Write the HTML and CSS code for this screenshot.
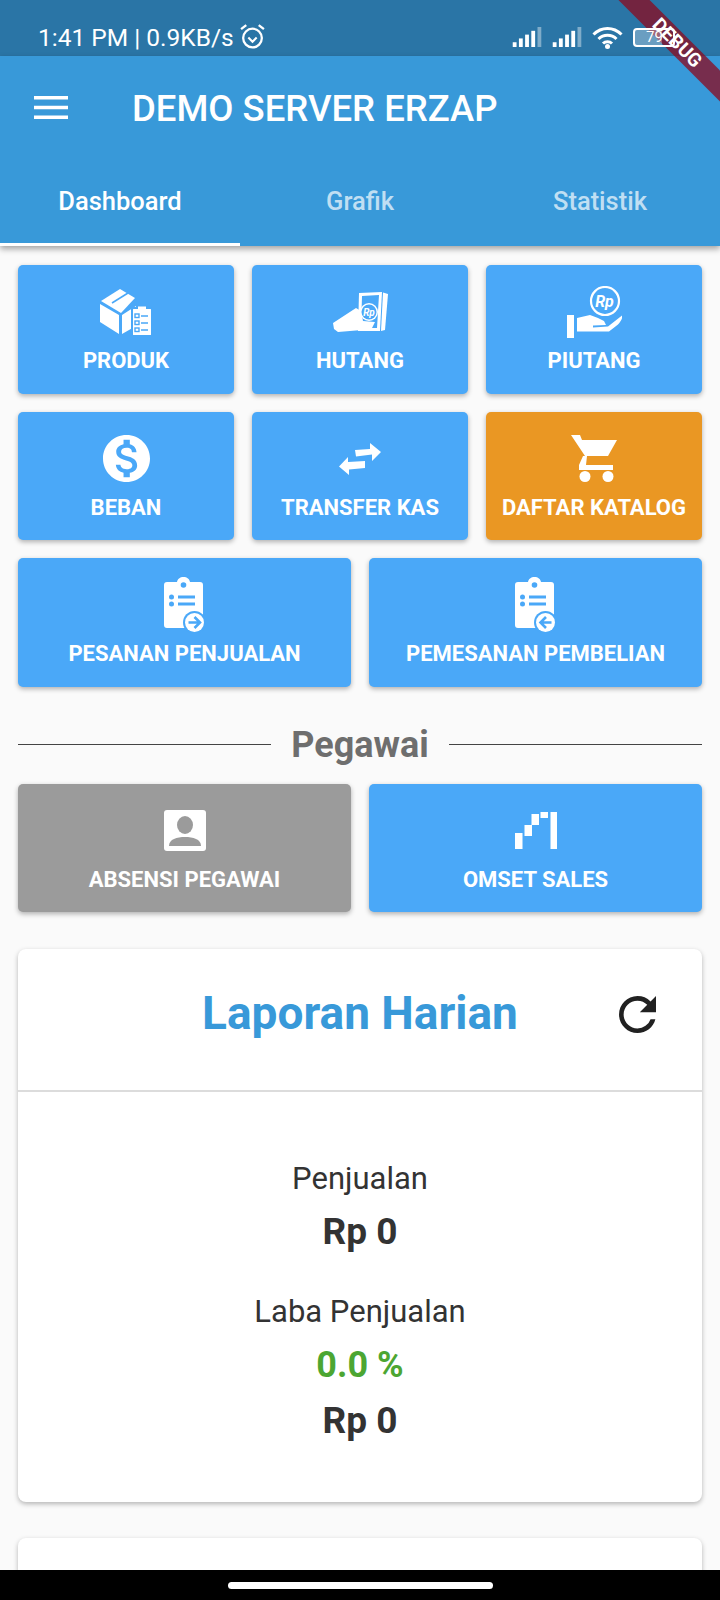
FILE: index.html
```html
<!DOCTYPE html>
<html lang="id">
<head>
<meta charset="utf-8">
<title>Demo Server Erzap</title>
<link rel="stylesheet" href="styles.css">
</head>
<body>
<div class="phone">
  <div class="statusbar">
    <div class="status-left">
      <span>1:41 PM | 0.9KB/s</span>
      <svg class="alarm" viewBox="0 0 26 26"><circle cx="13" cy="14.500" r="9" fill="none" stroke="#fff" stroke-width="2.200"/><path d="M9 14l4 4 4-4" fill="none" stroke="#fff" stroke-width="2"/><path d="M2 6l5-4M24 6l-5-4" stroke="#fff" stroke-width="2.200" fill="none"/></svg>
    </div>
    <div class="status-right">
      <svg class="signal" viewBox="0 0 31 21"><rect x="0" y="16" width="4" height="5" fill="#fff"/><rect x="6.500" y="12" width="4" height="9" fill="#fff"/><rect x="13" y="8" width="4" height="13" fill="#fff"/><rect x="19.500" y="4" width="4" height="17" fill="#fff"/><rect x="26" y="0" width="4" height="21" fill="#fff" opacity=".4"/></svg>
      <svg class="signal" viewBox="0 0 31 21"><rect x="0" y="16" width="4" height="5" fill="#fff"/><rect x="6.500" y="12" width="4" height="9" fill="#fff"/><rect x="13" y="8" width="4" height="13" fill="#fff"/><rect x="19.500" y="4" width="4" height="17" fill="#fff"/><rect x="26" y="0" width="4" height="21" fill="#fff" opacity=".4"/></svg>
      <svg class="wifi" viewBox="0 0 31 23"><g fill="none" stroke="#fff" stroke-width="3"><path d="M1.500 8.500C9.500 .5 21.500 .5 29.500 8.500"/><path d="M6.500 13C11.500 8 19.500 8 24.500 13"/><path d="M11 17.500C13.500 15 17.500 15 20 17.500"/></g><circle cx="15.500" cy="20.500" r="2.500" fill="#fff"/></svg>
      <div class="battery"><div class="battery-fill"></div><span class="battery-text">79</span></div>
    </div>
  </div>

  <header class="appbar">
    <div class="toolbar">
      <svg class="menu" viewBox="0 0 34 23"><path d="M0 0h34v3.500H0zM0 9.800h34v3.500H0zM0 19.500h34V23H0z" fill="#fff"/></svg>
      <h1 class="title">DEMO SERVER ERZAP</h1>
    </div>
    <nav class="tabs">
      <div class="tab tab-active">Dashboard</div>
      <div class="tab">Grafik</div>
      <div class="tab">Statistik</div>
    </nav>
  </header>

  <main class="content">
    <section class="grid grid-3">
      <a class="btn">
        <span class="icon-box">
          <svg class="ic-produk" viewBox="0 0 52 47"><path d="M20 0L35 9 21 24 1 12z" fill="#fff"/><path d="M0 15l19 11v19L0 33zM22 26l14-9v20L22 45z" fill="#fff"/><path d="M28 4L12 14" stroke="#4aa8f8" stroke-width="1.600" fill="none"/><rect x="32" y="19" width="20" height="28" rx="1.500" fill="#fff" stroke="#4aa8f8" stroke-width="2"/><rect x="38" y="17.500" width="8" height="4" fill="#fff"/><g fill="none" stroke="#4aa8f8" stroke-width="1.400"><rect x="35" y="25" width="4" height="3.500"/><rect x="35" y="32" width="4" height="3.500"/><rect x="35" y="39" width="4" height="3.500"/><path d="M41 27h7M41 34h7M41 41h7"/></g></svg>
        </span>
        <span class="label">PRODUK</span>
      </a>
      <a class="btn">
        <span class="icon-box">
          <svg class="ic-hutang" viewBox="0 0 56 42"><path d="M51 1.500l5 1.500-3 36-4 1z" fill="#fff"/><path d="M27 2l23-1-2 39-22 0z" fill="#fff"/><path d="M30 5l17-1-2 33-16 0z" fill="#4aa8f8"/><path d="M1 32L24 17l5 3 2 10 12 1-3 6-10 2-24 2-4-3z" fill="#fff"/><circle cx="37" cy="21" r="9" fill="#fff"/><circle cx="37" cy="21" r="7.500" fill="#4aa8f8"/><text class="rp-small" x="37" y="24.500" text-anchor="middle">Rp</text></svg>
        </span>
        <span class="label">HUTANG</span>
      </a>
      <a class="btn">
        <span class="icon-box">
          <svg class="ic-piutang" viewBox="0 0 55 52"><circle cx="38" cy="15" r="14" fill="none" stroke="#fff" stroke-width="2.200"/><text class="rp-big" x="37.500" y="20.500" text-anchor="middle">Rp</text><rect x="0" y="29" width="7" height="23" fill="#fff"/><path d="M10 32l13-3 8 3 6 3 2 4-13 .5v2l15-1 14-11c1 2-1 6-4 9l-9 7H10z" fill="#fff"/></svg>
        </span>
        <span class="label">PIUTANG</span>
      </a>
      <a class="btn">
        <span class="icon-box">
          <svg class="ic-circle" viewBox="2 2 20 20"><path d="M12 2C6.480 2 2 6.480 2 12s4.480 10 10 10 10-4.480 10-10S17.520 2 12 2zm1.410 16.090V20h-2.670v-1.930c-1.710-.36-3.160-1.460-3.270-3.400h1.960c.1 1.050.82 1.870 2.650 1.870 1.960 0 2.400-.98 2.400-1.590 0-.83-.44-1.610-2.670-2.140-2.480-.6-4.180-1.620-4.180-3.670 0-1.720 1.390-2.840 3.110-3.210V4h2.670v1.950c1.860.45 2.790 1.860 2.850 3.390H14.300c-.05-1.110-.64-1.870-2.220-1.870-1.500 0-2.400.68-2.400 1.640 0 .84.65 1.390 2.670 1.910s4.180 1.390 4.180 3.910c-.01 1.830-1.380 2.830-3.120 3.160z" fill="#fff"/></svg>
        </span>
        <span class="label">BEBAN</span>
      </a>
      <a class="btn">
        <span class="icon-box">
          <svg class="ic-swap" viewBox="0 0 42 32"><path d="M16 7l15-1V0l11 9-9 9v-6.500l-16 2zM0 23.500L9 14v5l17-1v7l-16 1.500V32z" fill="#fff"/></svg>
        </span>
        <span class="label">TRANSFER KAS</span>
      </a>
      <a class="btn btn-orange">
        <span class="icon-box">
          <svg class="ic-cart" viewBox="0 0 46 47"><path d="M0 0h9l2 5h35l-9 16H14zM12 21h4l-1 9h27v5H8v-5z" fill="#fff"/><circle cx="14" cy="41.500" r="5.500" fill="#fff"/><circle cx="37" cy="41.500" r="5.500" fill="#fff"/></svg>
        </span>
        <span class="label">DAFTAR KATALOG</span>
      </a>
    </section>

    <section class="grid grid-2 row-last">
      <a class="btn">
        <span class="icon-box">
          <svg class="ic-assign" viewBox="0 0 42 56"><path d="M3 5h10C13.500 2 16 0 19.500 0S25.500 2 26 5h10c2 0 3 1 3 3v43H3c-2 0-3-1-3-3V8c0-2 1-3 3-3z" fill="#fff"/><g fill="#4aa8f8"><circle cx="19.500" cy="8" r="2.800"/><circle cx="7.500" cy="20" r="2.500"/><circle cx="7.500" cy="27" r="2.500"/><rect x="14" y="18.500" width="17" height="3"/><rect x="14" y="25.500" width="17" height="3"/><circle cx="30.500" cy="45.500" r="11.500"/></g><circle cx="30.500" cy="45.500" r="9.500" fill="#fff"/><path d="M24.500 45.500h11M30.500 40l5.500 5.500-5.500 5.500" fill="none" stroke="#4aa8f8" stroke-width="2.600"/></svg>
        </span>
        <span class="label">PESANAN PENJUALAN</span>
      </a>
      <a class="btn">
        <span class="icon-box">
          <svg class="ic-assign" viewBox="0 0 42 56"><path d="M3 5h10C13.500 2 16 0 19.500 0S25.500 2 26 5h10c2 0 3 1 3 3v43H3c-2 0-3-1-3-3V8c0-2 1-3 3-3z" fill="#fff"/><g fill="#4aa8f8"><circle cx="19.500" cy="8" r="2.800"/><circle cx="7.500" cy="20" r="2.500"/><circle cx="7.500" cy="27" r="2.500"/><rect x="14" y="18.500" width="17" height="3"/><rect x="14" y="25.500" width="17" height="3"/><circle cx="30.500" cy="45.500" r="11.500"/></g><circle cx="30.500" cy="45.500" r="9.500" fill="#fff"/><path d="M36.500 45.500h-11M31 40l-5.500 5.500 5.500 5.500" fill="none" stroke="#4aa8f8" stroke-width="2.600"/></svg>
        </span>
        <span class="label">PEMESANAN PEMBELIAN</span>
      </a>
    </section>

    <div class="section-divider">
      <span class="rule"></span>
      <span class="section-title">Pegawai</span>
      <span class="rule"></span>
    </div>

    <section class="grid grid-2">
      <a class="btn btn-grey">
        <span class="icon-box">
          <svg class="ic-portrait" viewBox="0 0 42 41"><rect width="42" height="41" rx="3" fill="#fff"/><ellipse cx="21" cy="15" rx="8" ry="9" fill="#9b9b9b"/><path d="M5 36c0-7 8-9 16-9s16 2 16 9z" fill="#9b9b9b"/></svg>
        </span>
        <span class="label">ABSENSI PEGAWAI</span>
      </a>
      <a class="btn">
        <span class="icon-box">
          <svg class="ic-omset" viewBox="0 0 42 37"><path d="M0 21h7.500v16H0zM9.500 13H17v11H9.500zM16.500 2H24v11h-7.500zM25.500 0H33v6h-7.500zM35.500 0H42v37h-6.500z" fill="#fff"/></svg>
        </span>
        <span class="label">OMSET SALES</span>
      </a>
    </section>

    <section class="card report">
      <div class="report-head">
        <h2 class="report-title">Laporan Harian</h2>
        <svg class="refresh" viewBox="4 4 16 16"><path d="M17.650 6.350A7.958 7.958 0 0 0 12 4c-4.420 0-7.990 3.580-7.990 8s3.570 8 7.990 8c3.730 0 6.840-2.550 7.730-6h-2.080A5.990 5.990 0 0 1 12 18c-3.310 0-6-2.690-6-6s2.690-6 6-6c1.660 0 3.140.69 4.220 1.780L13 11h7V4l-2.350 2.350z" fill="#212121"/></svg>
      </div>
      <div class="report-body">
        <div class="metric-label">Penjualan</div>
        <div class="metric-value">Rp 0</div>
        <div class="metric-label metric-second">Laba Penjualan</div>
        <div class="metric-percent">0.0 %</div>
        <div class="metric-value">Rp 0</div>
      </div>
    </section>

    <section class="card next-card"></section>
  </main>

  <div class="navbar"><span class="pill"></span></div>
  <div class="debug-banner"><span>DEBUG</span></div>
</div>
</body>
</html>
```

FILE: styles.css
```css
* { box-sizing: border-box; }
html, body { margin: 0; padding: 0; }
body { font-family: Roboto, "Noto Sans", sans-serif; background: #fafafa; }
.phone { position: relative; width: 720px; height: 1600px; overflow: hidden; background: #fafafa; display: flex; flex-direction: column; }

.statusbar { height: 56px; flex: none; background: #2a75a6; color: #fff; display: flex; justify-content: space-between; padding: 21px 45px 0 38px; font-size: 24.500px; line-height: 34px; }
.status-left { display: flex; align-items: flex-start; gap: 5px; }
.alarm { width: 27px; height: 27px; margin-top: 2px; }
.status-right { display: flex; align-items: flex-start; padding-top: 6px; }
.signal { width: 31px; height: 20px; margin-right: 9px; }
.wifi { width: 31px; height: 23px; margin-right: 10px; margin-top: -1px; }
.battery { position: relative; z-index: 4; width: 42px; height: 19px; margin-top: 1px; border: 2px solid #fff; border-radius: 4px; }
.battery-fill { width: 72%; height: 100%; background: rgba(255,255,255,.3); }
.battery-text { position: absolute; left: 11px; top: -2px; font-size: 15px; line-height: 19px; }

.appbar { height: 190px; flex: none; background: #3899d9; box-shadow: 0 3px 6px rgba(0,0,0,.35); display: flex; flex-direction: column; position: relative; z-index: 1; }
.toolbar { height: 100px; display: flex; align-items: center; padding-left: 34px; }
.menu { width: 34px; height: 23px; flex: none; margin-top: 3px; }
.title { margin: 6px 0 0 64px; color: #fff; font-size: 36.500px; font-weight: 500; line-height: 100px; white-space: nowrap; }
.tabs { flex: 1; display: grid; grid-template-columns: repeat(3, 1fr); }
.tab { display: flex; align-items: center; justify-content: center; color: rgba(255,255,255,.7); font-size: 25.500px; font-weight: 500; }
.tab-active { color: #fff; border-bottom: 3px solid #fff; padding-top: 3px; }

.content { flex: 1; padding: 19px 18px 0; min-height: 0; }
.grid { display: grid; gap: 18px; }
.grid-3 { grid-template-columns: repeat(3, 1fr); }
.grid-2 { grid-template-columns: repeat(2, 1fr); }
.row-last { margin-top: 18px; }

.btn { height: 128.500px; background: #4aa8f8; border-radius: 5px; box-shadow: 0 2px 5px rgba(0,0,0,.3); color: #fff; display: flex; flex-direction: column; align-items: center; padding-top: 18px; }
.btn-orange { background: #ea9723; }
.btn-grey { background: #9b9b9b; }
.icon-box { height: 58px; display: flex; align-items: center; justify-content: center; flex: none; }
.icon-box svg { display: block; }
.label { margin-top: 4px; font-size: 22px; font-weight: 700; line-height: 32px; white-space: nowrap; }

.ic-produk { width: 52px; height: 47px; }
.ic-hutang { width: 56px; height: 42px; }
.ic-piutang { width: 55px; height: 52px; }
.ic-circle { width: 47px; height: 47px; }
.ic-swap { width: 42px; height: 32px; }
.ic-cart { width: 46px; height: 47px; }
.ic-assign { width: 42px; height: 56px; }
.ic-portrait { width: 42px; height: 41px; }
.ic-omset { width: 42px; height: 37px; }
.rp-small { font: italic 700 10px Roboto, sans-serif; fill: #fff; }
.rp-big { font: italic 700 16px Roboto, sans-serif; fill: #fff; }

.section-divider { height: 97px; padding-top: 19px; display: flex; align-items: center; gap: 20px; }
.rule { flex: 1; height: 1px; background: #444; }
.section-title { font-size: 36px; font-weight: 700; color: #6e6e6e; line-height: 44px; }

.card { background: #fff; border-radius: 8px; box-shadow: 0 2px 5px rgba(0,0,0,.28); }
.report { margin-top: 37px; height: 553px; }
.report-head { height: 143px; display: flex; align-items: center; justify-content: center; position: relative; border-bottom: 2px solid #dcdcdc; padding-bottom: 14px; }
.report-title { margin: 0; font-size: 46px; font-weight: 700; color: #3899d9; }
.refresh { position: absolute; right: 46px; top: 47px; width: 37px; height: 37px; }
.report-body { display: flex; flex-direction: column; align-items: center; padding-top: 67px; color: #333; }
.metric-label { font-size: 31px; line-height: 40px; }
.metric-second { margin-top: 32px; }
.metric-value { font-size: 37px; font-weight: 700; line-height: 56px; margin-top: 5px; }
.metric-percent { font-size: 36px; font-weight: 700; color: #4ca632; line-height: 46px; margin-top: 10px; }
.next-card { margin-top: 36px; height: 100px; }

.navbar { position: absolute; left: 0; right: 0; bottom: 0; height: 30px; background: #000; display: flex; justify-content: center; padding-top: 12px; z-index: 2; }
.pill { width: 265px; height: 7px; border-radius: 4px; background: #fff; }

.debug-banner { position: absolute; top: 32px; right: -67px; width: 220px; height: 22px; background: rgba(140,10,30,.75); color: #fff; transform: rotate(45deg); text-align: center; font-size: 19px; font-weight: 700; line-height: 22px; z-index: 3; }
```
